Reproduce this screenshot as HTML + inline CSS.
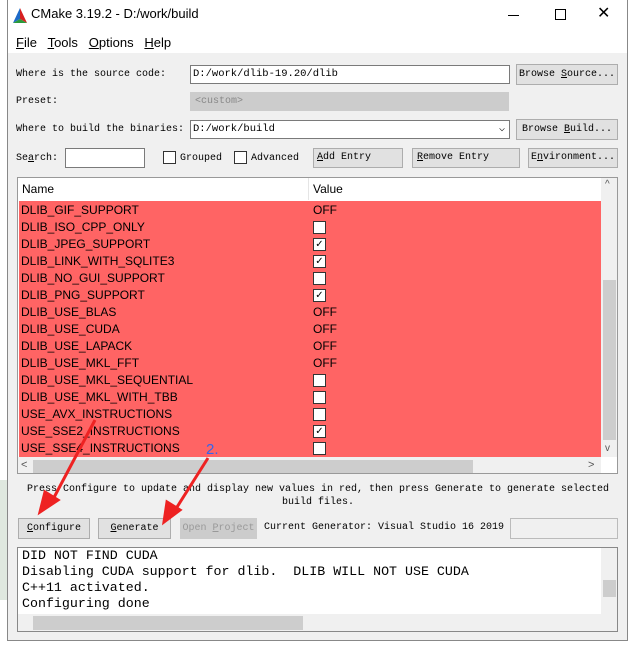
<!DOCTYPE html><html><head><style>
body{margin:0;width:636px;height:650px;background:#fff;position:relative;overflow:hidden;font-family:"Liberation Sans",sans-serif}
.a{position:absolute;white-space:nowrap}
.m{font-family:"Liberation Mono","Noto Serif CJK SC",monospace;font-size:10px;color:#000}
.btn{position:absolute;white-space:nowrap;overflow:hidden;background:#e1e1e1;border:1px solid #adadad;box-sizing:border-box;font-family:"Liberation Mono",monospace;font-size:10px;text-align:center;line-height:17px}
.in{position:absolute;background:#fff;border:1px solid #7a7a7a;box-sizing:border-box;font-family:"Liberation Mono",monospace;font-size:10.5px;padding-left:2px;line-height:17px}
.row{position:absolute;left:19px;width:582px;height:17px;font-size:12px;line-height:17px;color:#000}
.row span{position:absolute;left:2px}
.row b{position:absolute;left:294px;font-weight:normal}
.cb{position:absolute;left:294px;top:2px;width:11px;height:11px;background:#fff;border:1px solid #333;font-size:10px;line-height:11px;text-align:center;font-style:normal}
</style></head><body>
<div class="a" style="left:0;top:480px;width:8px;height:120px;background:#dfe8df"></div>
<div class="a" style="left:7px;top:0;width:621px;height:641px;border:1px solid #888;border-top:none;box-sizing:border-box;background:#f0f0f0"></div>
<div class="a" style="left:8px;top:0;width:619px;height:53px;background:#fff"></div>
<svg class="a" style="left:13px;top:8px" width="14" height="15"><polygon points="7,0 0,15 7,11" fill="#1e6ac8"/><polygon points="7,0 14,15 7,11" fill="#d62020"/><polygon points="0,15 14,15 7,11" fill="#2b9a3b"/></svg>
<div class="a" style="left:31px;top:6px;font-size:13px">CMake 3.19.2 - D:/work/build</div>
<div class="a" style="left:508px;top:15px;width:11px;height:1px;background:#000"></div>
<div class="a" style="left:555px;top:9px;width:9px;height:9px;border:1px solid #000"></div>
<div class="a" style="left:597px;top:3px;font-size:16px">✕</div>
<div class="a" style="left:16px;top:35px;font-size:13px"><u>F</u>ile &nbsp; <u>T</u>ools &nbsp; <u>O</u>ptions &nbsp; <u>H</u>elp</div>
<div class="a m" style="left:16px;top:69px">Where is the source code:</div>
<div class="in" style="left:190px;top:65px;width:320px;height:19px">D:/work/dlib-19.20/dlib</div>
<div class="btn" style="left:516px;top:64px;width:102px;height:21px;line-height:19px">Browse <u>S</u>ource...</div>
<div class="a m" style="left:16px;top:96px">Preset:</div>
<div class="a" style="left:190px;top:92px;width:319px;height:19px;background:#ccc;border:1px solid #ccc;box-sizing:border-box;font-family:Liberation Mono;font-size:10px;color:#888;padding-left:4px;line-height:17px">&lt;custom&gt;</div>
<div class="a m" style="left:16px;top:124px">Where to build the binaries:</div>
<div class="in" style="left:190px;top:120px;width:320px;height:19px">D:/work/build<span style="position:absolute;right:4px;font-size:10px">⌵</span></div>
<div class="btn" style="left:516px;top:119px;width:102px;height:21px;line-height:19px">Browse <u>B</u>uild...</div>
<div class="a m" style="left:16px;top:153px">Se<u>a</u>rch:</div>
<div class="in" style="left:65px;top:148px;width:80px;height:20px"></div>
<div class="a" style="left:163px;top:151px;width:11px;height:11px;border:1px solid #333;background:#fff"></div>
<div class="a m" style="left:180px;top:153px">Grouped</div>
<div class="a" style="left:234px;top:151px;width:11px;height:11px;border:1px solid #333;background:#fff"></div>
<div class="a m" style="left:251px;top:153px">Advanced</div>
<div class="btn" style="left:313px;top:148px;width:90px;height:20px;text-align:left;padding-left:3px"><u>A</u>dd Entry</div>
<div class="btn" style="left:412px;top:148px;width:108px;height:20px;text-align:left;padding-left:4px"><u>R</u>emove Entry</div>
<div class="btn" style="left:528px;top:148px;width:90px;height:20px">E<u>n</u>vironment...</div>
<div class="a" style="left:17px;top:177px;width:601px;height:297px;background:#fff;border:1px solid #999;box-sizing:border-box"></div>
<div class="a" style="left:22px;top:182px;font-size:12px">Name</div>
<div class="a" style="left:308px;top:178px;width:1px;height:22px;background:#e5e5e5"></div>
<div class="a" style="left:313px;top:182px;font-size:12px">Value</div>
<div class="a" style="left:19px;top:201px;width:582px;height:256px;background:#ff6464"></div>
<div class="row" style="top:202px"><span>DLIB_GIF_SUPPORT</span><b>OFF</b></div>
<div class="row" style="top:219px"><span>DLIB_ISO_CPP_ONLY</span><i class="cb"></i></div>
<div class="row" style="top:236px"><span>DLIB_JPEG_SUPPORT</span><i class="cb">✓</i></div>
<div class="row" style="top:253px"><span>DLIB_LINK_WITH_SQLITE3</span><i class="cb">✓</i></div>
<div class="row" style="top:270px"><span>DLIB_NO_GUI_SUPPORT</span><i class="cb"></i></div>
<div class="row" style="top:287px"><span>DLIB_PNG_SUPPORT</span><i class="cb">✓</i></div>
<div class="row" style="top:304px"><span>DLIB_USE_BLAS</span><b>OFF</b></div>
<div class="row" style="top:321px"><span>DLIB_USE_CUDA</span><b>OFF</b></div>
<div class="row" style="top:338px"><span>DLIB_USE_LAPACK</span><b>OFF</b></div>
<div class="row" style="top:355px"><span>DLIB_USE_MKL_FFT</span><b>OFF</b></div>
<div class="row" style="top:372px"><span>DLIB_USE_MKL_SEQUENTIAL</span><i class="cb"></i></div>
<div class="row" style="top:389px"><span>DLIB_USE_MKL_WITH_TBB</span><i class="cb"></i></div>
<div class="row" style="top:406px"><span>USE_AVX_INSTRUCTIONS</span><i class="cb"></i></div>
<div class="row" style="top:423px"><span>USE_SSE2_INSTRUCTIONS</span><i class="cb">✓</i></div>
<div class="row" style="top:440px"><span>USE_SSE4_INSTRUCTIONS</span><i class="cb"></i></div>
<div class="a" style="left:601px;top:178px;width:16px;height:279px;background:#f0f0f0"></div>
<div class="a" style="left:603px;top:280px;width:13px;height:160px;background:#cdcdcd"></div>
<div class="a" style="left:605px;top:179px;font-size:10px;color:#555">^</div>
<div class="a" style="left:605px;top:443px;font-size:10px;color:#555">v</div>
<div class="a" style="left:18px;top:457px;width:583px;height:16px;background:#f0f0f0"></div>
<div class="a" style="left:33px;top:460px;width:440px;height:13px;background:#cdcdcd"></div>
<div class="a" style="left:21px;top:459px;font-size:11px;color:#555">&lt;</div>
<div class="a" style="left:588px;top:459px;font-size:11px;color:#555">&gt;</div>
<div class="a m" style="left:20px;top:483px;width:596px;text-align:center;line-height:13px;white-space:normal">Press Configure to update and display new values in red, then press Generate to generate selected build files.</div>
<div class="btn" style="left:18px;top:518px;width:72px;height:21px;line-height:20px"><u>C</u>onfigure</div>
<div class="btn" style="left:98px;top:518px;width:73px;height:21px;line-height:20px"><u>G</u>enerate</div>
<div class="btn" style="left:180px;top:518px;width:77px;height:21px;line-height:20px;color:#999;border-color:#ccc;background:#ccc">Open <u>P</u>roject</div>
<div class="a m" style="left:264px;top:522px">Current Generator: Visual Studio 16 2019</div>
<div class="a" style="left:510px;top:518px;width:108px;height:21px;border:1px solid #bbb;box-sizing:border-box"></div>
<div class="a" style="left:17px;top:547px;width:601px;height:85px;background:#fff;border:1px solid #888;box-sizing:border-box"></div>
<div class="a" style="left:22px;top:548px;font-family:Liberation Mono;font-size:13.3px;line-height:16px;white-space:pre">DID NOT FIND CUDA
Disabling CUDA support for dlib.  DLIB WILL NOT USE CUDA
C++11 activated.
Configuring done</div>
<div class="a" style="left:601px;top:548px;width:16px;height:66px;background:#f0f0f0"></div>
<div class="a" style="left:603px;top:580px;width:13px;height:17px;background:#cdcdcd"></div>
<div class="a" style="left:18px;top:614px;width:599px;height:17px;background:#f0f0f0"></div>
<div class="a" style="left:33px;top:616px;width:270px;height:14px;background:#cdcdcd"></div>
<svg class="a" style="left:0;top:0" width="636" height="650">
<g stroke="#ee2222" stroke-width="3" fill="#ee2222">
<line x1="95" y1="420" x2="50" y2="505"/><polygon points="40,512 45,492 58,500"/>
<line x1="208" y1="458" x2="172" y2="515"/><polygon points="164,522 167,502 180,510"/>
</g>
<text x="206" y="454" font-family="Liberation Sans" font-size="15" fill="#3366ee">2.</text>
</svg>
</body></html>
